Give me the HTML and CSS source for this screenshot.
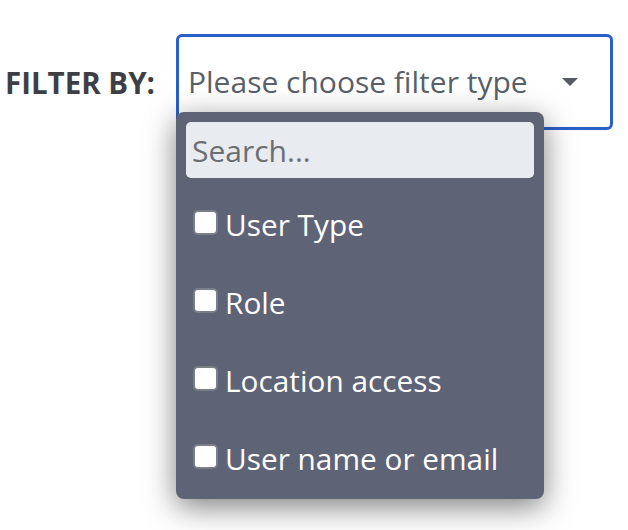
FILE: index.html
```html
<!DOCTYPE html>
<html>
<head>
<meta charset="utf-8">
<link rel="stylesheet" href="styles.css">
</head>
<body>
<div class="filter-row">
  <label class="filter-label">FILTER BY:</label>
  <div class="select-wrap">
    <div class="select-box">
      <span class="placeholder">Please choose filter type</span>
      <svg class="caret" width="16" height="8" viewBox="0 0 16 8"><path d="M0 0 L16 0 L8 8 Z" fill="#555a63"/></svg>
    </div>
    <div class="dropdown">
      <div class="search">Search...</div>
      <ul class="options">
        <li class="option"><span class="check"></span><span>User Type</span></li>
        <li class="option"><span class="check"></span><span>Role</span></li>
        <li class="option"><span class="check"></span><span>Location access</span></li>
        <li class="option"><span class="check"></span><span>User name or email</span></li>
      </ul>
    </div>
  </div>
</div>
</body>
</html>
```
FILE: styles.css
```css
html, body {
  margin: 0;
  padding: 0;
  background: #ffffff;
  font-family: "Open Sans", "Noto Sans", sans-serif;
}
body {
  min-height: 530px;
}
.filter-row {
  display: flex;
  align-items: center;
  padding: 34px 0 0 5px;
}
.filter-label {
  font-weight: 700;
  font-size: 29.5px;
  color: #3d3f44;
  width: 171px;
  flex: none;
}
.select-wrap {
  position: relative;
}
.select-box {
  box-sizing: border-box;
  width: 437px;
  height: 96px;
  border: 3px solid #2a5fc9;
  border-radius: 6px;
  display: flex;
  align-items: center;
  padding: 0 32px 0 9px;
  justify-content: space-between;
}
.placeholder {
  font-size: 30px;
  color: #5a5f68;
  margin-top: -2px;
}
.caret {
  display: block;
}
.dropdown {
  position: absolute;
  left: 0;
  top: 78px;
  box-sizing: border-box;
  width: 368px;
  height: 387px;
  background: #5e6476;
  border-radius: 8px;
  padding: 10px;
  box-shadow: 0 8px 30px rgba(0, 0, 0, 0.5);
}
.search {
  box-sizing: border-box;
  height: 56px;
  background: #e8ebef;
  border-radius: 5px;
  padding: 0 6px;
  display: flex;
  align-items: center;
  font-size: 30px;
  color: #6b6e73;
}
.options {
  list-style: none;
  margin: 0;
  padding: 0;
}
.option {
  display: flex;
  align-items: center;
  gap: 7px;
  height: 78px;
  padding-left: 7px;
  font-size: 29.8px;
  color: #ffffff;
}
.option span:last-child {
  margin-top: -3px;
}
.option:first-child {
  margin-top: 9px;
}
.check {
  box-sizing: border-box;
  width: 25px;
  height: 25px;
  background: #ffffff;
  border: 2px solid #7a7e86;
  border-radius: 5px;
  flex: none;
  margin-top: -8px;
}
```
